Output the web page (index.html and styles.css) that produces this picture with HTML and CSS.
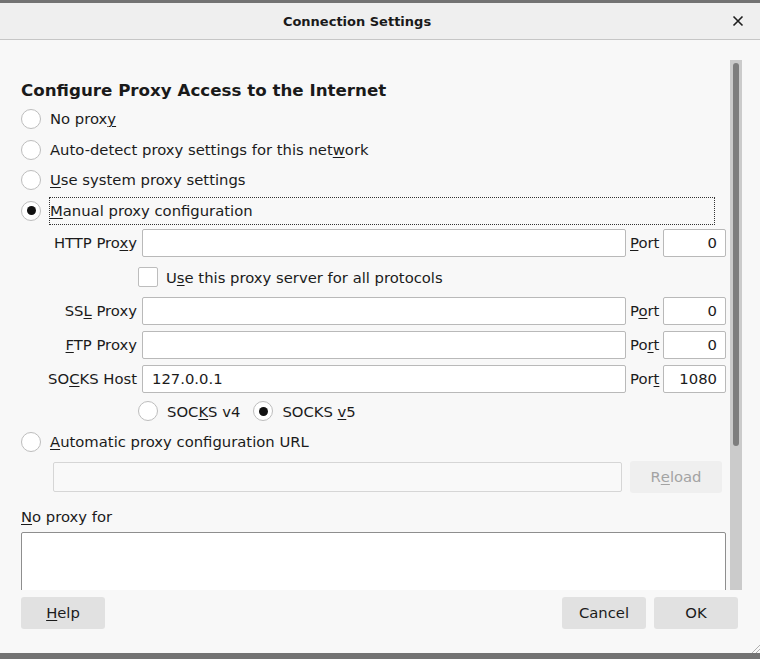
FILE: index.html
```html
<!DOCTYPE html>
<html>
<head>
<meta charset="utf-8">
<link rel="stylesheet" href="styles.css">
</head>
<body>
<div class="window">
  <div class="titlebar">
    <span class="title">Connection Settings</span>
    <svg class="close" width="12" height="12" viewBox="0 0 12 12"><path d="M1.5 1.5 L10.5 10.5 M10.5 1.5 L1.5 10.5" stroke="#1e1e1e" stroke-width="1.6" fill="none"/></svg>
  </div>
  <div class="content">
    <h1 class="heading">Configure Proxy Access to the Internet</h1>
    <div class="choices">
      <div class="choice"><span class="radio"></span><span class="label">No prox<u>y</u></span></div>
      <div class="choice"><span class="radio"></span><span class="label">Auto-detect proxy settings for this net<u>w</u>ork</span></div>
      <div class="choice"><span class="radio"></span><span class="label"><u>U</u>se system proxy settings</span></div>
      <div class="choice"><span class="radio checked"></span><span class="label focus"><u>M</u>anual proxy configuration</span></div>
    </div>
    <div class="proxygrid">
      <span class="plabel">HTTP Pro<u>x</u>y</span>
      <span class="field"></span>
      <span class="portlabel"><u>P</u>ort</span>
      <span class="field port">0</span>

      <div class="fullrow">
        <span class="checkbox"></span><span class="cblabel">U<u>s</u>e this proxy server for all protocols</span>
      </div>

      <span class="plabel">SS<u>L</u> Proxy</span>
      <span class="field"></span>
      <span class="portlabel">P<u>o</u>rt</span>
      <span class="field port">0</span>

      <span class="plabel"><u>F</u>TP Proxy</span>
      <span class="field"></span>
      <span class="portlabel">Po<u>r</u>t</span>
      <span class="field port">0</span>

      <span class="plabel">SO<u>C</u>KS Host</span>
      <span class="field host">127.0.0.1</span>
      <span class="portlabel">Por<u>t</u></span>
      <span class="field port">1080</span>

      <div class="fullrow socks">
        <span class="radio"></span><span class="slabel">SOC<u>K</u>S v4</span>
        <span class="radio checked"></span><span class="slabel">SOCKS <u>v</u>5</span>
      </div>
    </div>
    <div class="choice auto"><span class="radio"></span><span class="label"><u>A</u>utomatic proxy configuration URL</span></div>
    <div class="urlrow">
      <span class="urlfield"></span>
      <span class="btn disabled">R<u>e</u>load</span>
    </div>
    <div class="noproxy"><u>N</u>o proxy for</div>
    <div class="textarea"></div>

    <div class="scrollbar"><div class="thumb"></div></div>
  </div>
  <div class="footer">
    <span class="btn"><u>H</u>elp</span>
    <div class="right">
      <span class="btn">Cancel</span>
      <span class="btn">OK</span>
    </div>
    <svg class="grip" width="12" height="9" viewBox="0 0 12 9"><path d="M12 1 L4 9 M12 5 L8 9" stroke="#b0b0b0" stroke-width="1" fill="none"/></svg>
  </div>
</div>
</body>
</html>
```
FILE: styles.css
```css
* { box-sizing: border-box; }
html, body { margin: 0; padding: 0; }
body {
  background: #737373;
  width: 760px;
  height: 659px;
  overflow: hidden;
  font-family: "DejaVu Sans", sans-serif;
  font-size: 14.8px;
  color: #1b1b1b;
}
u { text-decoration-thickness: 1px; text-underline-offset: 2px; }
.window {
  margin-top: 3px;
  height: 650px;
  background: #f8f8f8;
  display: flex;
  flex-direction: column;
}
.titlebar {
  height: 37px;
  flex: none;
  background: #efefef;
  border-bottom: 1px solid #c6c6c6;
  display: flex;
  align-items: center;
  justify-content: center;
  position: relative;
}
.title {
  font-weight: bold;
  font-size: 13px;
  color: #1a1a1a;
  margin-right: 46px;
}
.close {
  position: absolute;
  right: 16px;
  top: 12px;
}
.content {
  height: 550px;
  flex: none;
  overflow: hidden;
  position: relative;
  padding: 0 34px 0 21px;
}
.heading {
  margin: 39px 0 0 0;
  font-size: 16.7px;
  line-height: 22px;
  font-weight: bold;
  color: #1a1a1a;
}
.choices {
  margin-top: 4px;
  display: flex;
  flex-direction: column;
  gap: 2.5px;
}
.choice {
  height: 28px;
  display: flex;
  align-items: center;
}
.radio {
  width: 20px;
  height: 20px;
  border: 1px solid #bdbdbd;
  border-radius: 50%;
  background: #fff;
  flex: none;
  display: inline-flex;
  align-items: center;
  justify-content: center;
}
.radio.checked::after {
  content: "";
  width: 9px;
  height: 9px;
  border-radius: 50%;
  background: #111;
}
.label {
  margin-left: 8px;
  padding-left: 0;
  line-height: 26px;
  border: 1px solid transparent;
}
.label.focus {
  flex: 1;
  margin-right: 11px;
  border: 1px dotted #333;
}
.proxygrid {
  margin-top: 4.5px;
  display: grid;
  grid-template-columns: 121px 484px 37px 63px;
  grid-template-rows: 28px 28px 28px 28px 28px 24px;
  row-gap: 6px;
}
.plabel {
  text-align: right;
  padding-right: 5px;
  align-self: center;
  white-space: nowrap;
  padding-bottom: 1px;
}
.portlabel {
  padding-left: 4px;
  align-self: center;
  padding-bottom: 1px;
}
.field {
  background: #fff;
  border: 1px solid #b9b9b9;
  border-radius: 2px;
  height: 28px;
  line-height: 25px;
}
.field.host { padding-left: 9px; }
.field.port { text-align: right; padding-right: 8px; }
.fullrow {
  grid-column: 1 / -1;
  display: flex;
  align-items: center;
  padding-left: 117px;
}
.checkbox {
  width: 20px;
  height: 20px;
  border: 1px solid #bdbdbd;
  border-radius: 2px;
  background: #fff;
  flex: none;
}
.cblabel { margin-left: 8px; }
.slabel { margin-left: 9px; margin-right: 13px; }
.choice.auto { margin-top: 5px; }
.urlrow {
  margin-top: 5px;
  display: flex;
  align-items: center;
  height: 32px;
}
.urlfield {
  margin-left: 32px;
  width: 569px;
  height: 30px;
  border: 1px solid #d6d6d6;
  border-radius: 2px;
  background: #f9f9f9;
}
.btn {
  width: 84px;
  height: 32px;
  background: #e1e1e1;
  border-radius: 3px;
  display: inline-flex;
  align-items: center;
  justify-content: center;
  color: #1b1b1b;
  flex: none;
  padding-bottom: 1px;
}
.btn.disabled {
  margin-left: 8px;
  width: 92px;
  background: #efefef;
  color: #a3a3a3;
}
.noproxy {
  margin-top: 13px;
  line-height: 22px;
}
.textarea {
  margin-top: 4px;
  height: 120px;
  background: #fff;
  border: 1px solid #8e8e8e;
  border-radius: 2px;
}
.scrollbar {
  position: absolute;
  top: 20px;
  bottom: 0;
  right: 18px;
  width: 12px;
  background: #cbcbcb;
}
.thumb {
  position: absolute;
  top: 3px;
  left: 3px;
  width: 6px;
  height: 383px;
  background: #7e7e7e;
  border-radius: 3px;
}
.footer {
  flex: 1;
  position: relative;
  display: flex;
  justify-content: space-between;
  padding: 7px 22px 0 21px;
}
.right { display: flex; gap: 8px; }
.grip {
  position: absolute;
  right: 0;
  bottom: 0;
}
```
